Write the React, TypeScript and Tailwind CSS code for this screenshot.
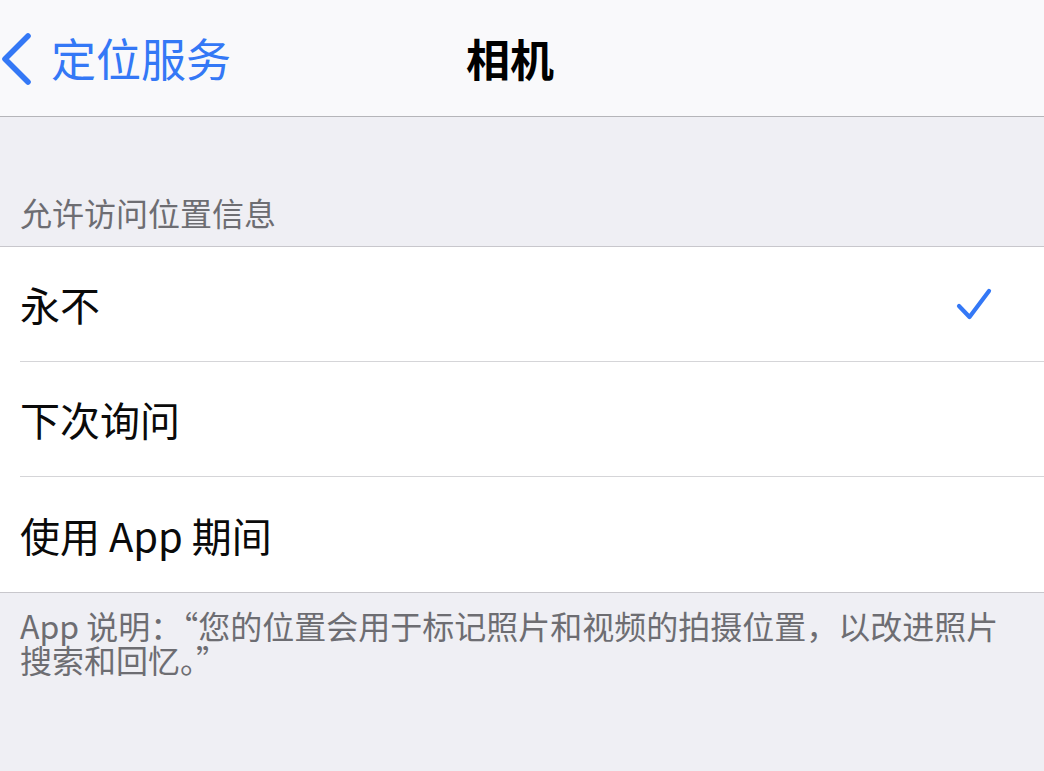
import React from "react";

const font = { fontFamily: '"Noto Sans CJK SC", "Noto Sans", sans-serif' };

function Row({ label, checked, last }: { label: string; checked?: boolean; last?: boolean }) {
  return (
    <div className="pl-[20px]">
      <div
        className={
          "h-[115px] flex items-center justify-between pr-[52px] " +
          (last ? "" : "border-b border-[#d5d5d8]")
        }
      >
        <span className="text-[40px] leading-[48px] text-[#0a0a0a]">{label}</span>
        {checked && (
          <svg width="36" height="36" viewBox="0 0 36 36">
            <path
              d="M3 20 L13.5 31 L33 5"
              fill="none"
              stroke="#3478f6"
              strokeWidth="4.2"
              strokeLinecap="round"
              strokeLinejoin="round"
            />
          </svg>
        )}
      </div>
    </div>
  );
}

export default function App() {
  return (
    <div className="w-[1044px] h-[771px] overflow-hidden bg-[#efeff4]" style={font}>
      <div className="h-[117px] bg-[#f9f9fb] border-b border-[#b5b5b9] grid grid-cols-[1fr_auto_1fr] items-center pr-[24px]">
        <div className="flex items-center text-[#3478f6]">
          <svg width="34" height="56" viewBox="0 0 34 56" className="mt-[2px]">
            <path
              d="M28 5 L5 28 L28 51"
              fill="none"
              stroke="#3478f6"
              strokeWidth="5.6"
              strokeLinecap="round"
              strokeLinejoin="round"
            />
          </svg>
          <span className="ml-[17px] text-[45px] leading-[56px]">定位服务</span>
        </div>
        <div className="text-[44px] leading-[56px] font-bold text-black">相机</div>
        <div />
      </div>
      <div className="h-[129px] flex items-end pl-[20px] pb-[14px]">
        <span className="text-[32px] leading-[40px] text-[#6d6d72]">允许访问位置信息</span>
      </div>
      <div className="bg-white border-t border-b border-[#c8c7cc]">
        <Row label="永不" checked />
        <Row label="下次询问" />
        <Row label="使用 App 期间" last />
      </div>
      <div className="px-[20px] pt-[15px] text-[32px] leading-[34px] text-[#6d6d72]">
        App 说明：“您的位置会用于标记照片和视频的拍摄位置，以改进照片
        <br />
        搜索和回忆。”
      </div>
    </div>
  );
}
